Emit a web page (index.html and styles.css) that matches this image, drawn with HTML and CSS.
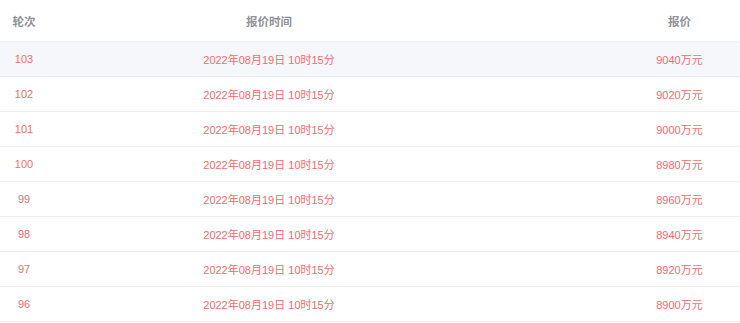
FILE: index.html
```html
<!DOCTYPE html>
<html lang="zh">
<head>
<meta charset="utf-8">
<link rel="stylesheet" href="styles.css">
</head>
<body>
<div class="table">
  <div class="row head">
    <div class="cell">轮次</div>
    <div class="cell">报价时间</div>
    <div class="cell">报价</div>
  </div>
  <div class="row hl">
    <div class="cell">103</div>
    <div class="cell">2022年08月19日 10时15分</div>
    <div class="cell">9040万元</div>
  </div>
  <div class="row">
    <div class="cell">102</div>
    <div class="cell">2022年08月19日 10时15分</div>
    <div class="cell">9020万元</div>
  </div>
  <div class="row">
    <div class="cell">101</div>
    <div class="cell">2022年08月19日 10时15分</div>
    <div class="cell">9000万元</div>
  </div>
  <div class="row">
    <div class="cell">100</div>
    <div class="cell">2022年08月19日 10时15分</div>
    <div class="cell">8980万元</div>
  </div>
  <div class="row">
    <div class="cell">99</div>
    <div class="cell">2022年08月19日 10时15分</div>
    <div class="cell">8960万元</div>
  </div>
  <div class="row">
    <div class="cell">98</div>
    <div class="cell">2022年08月19日 10时15分</div>
    <div class="cell">8940万元</div>
  </div>
  <div class="row">
    <div class="cell">97</div>
    <div class="cell">2022年08月19日 10时15分</div>
    <div class="cell">8920万元</div>
  </div>
  <div class="row">
    <div class="cell">96</div>
    <div class="cell">2022年08月19日 10时15分</div>
    <div class="cell">8900万元</div>
  </div>
</div>
</body>
</html>
```
FILE: styles.css
```css
html, body {
  margin: 0;
  padding: 0;
  background: #fff;
  overflow: hidden;
}
body {
  font-family: "Liberation Sans", "Noto Sans CJK SC", sans-serif;
  width: 740px;
}
.table {
  width: 740px;
  overflow: hidden;
}
.row {
  display: grid;
  grid-template-columns: 48px 442px 379px;
  height: 34px;
  align-items: center;
  border-bottom: 1px solid #ebeef5;
  color: #f56c6c;
  font-size: 11px;
}
.row.head {
  height: 41px;
  color: #909399;
  font-weight: bold;
  font-size: 11.5px;
}
.row.hl {
  background: #f5f7fa;
}
.cell {
  text-align: center;
  white-space: nowrap;
}
```
